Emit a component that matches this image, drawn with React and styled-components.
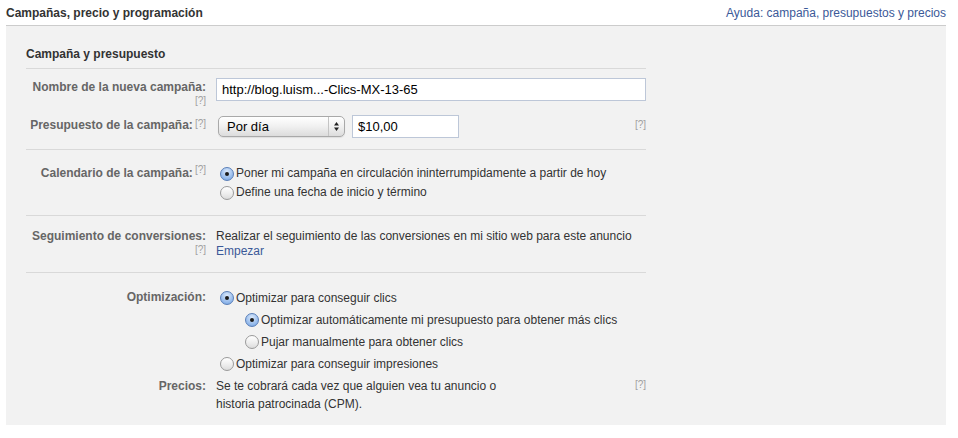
import React from "react";
import styled, { createGlobalStyle } from "styled-components";

const GlobalStyle = createGlobalStyle`
  html, body {
    margin: 0;
    padding: 0;
    background: #fff;
  }
  body {
    font-family: "Liberation Sans", Arial, Helvetica, sans-serif;
    font-size: 12px;
    color: #333;
  }
`;

const Page = styled.div`
  width: 940px;
  margin: 0 6px;
`;

const Header = styled.div`
  display: flex;
  justify-content: space-between;
  align-items: center;
  height: 25px;
  border-bottom: 1px solid #ccc;
`;

const Title = styled.h2`
  margin: 0;
  font-size: 12px;
  font-weight: bold;
  color: #333;
`;

const HelpLink = styled.a`
  color: #3b5998;
  text-decoration: none;
  font-size: 12px;
  cursor: pointer;
`;

const Panel = styled.div`
  background: #f2f2f2;
  padding: 21px 20px 0;
  height: 378px;
`;

const Section = styled.div`
  width: 620px;
`;

const SubHeading = styled.h3`
  margin: 0;
  font-size: 12px;
  font-weight: bold;
  line-height: 14px;
  color: #333;
  padding-bottom: 7px;
  border-bottom: 1px solid #d9d9d9;
`;

const Group = styled.div`
  padding: ${(p) => p.$pad || "12px 0"};
  border-bottom: ${(p) => (p.$last ? "none" : "1px solid #d9d9d9")};
  display: flex;
  flex-direction: column;
  gap: ${(p) => p.$gap || "0px"};
`;

const Row = styled.div`
  display: grid;
  grid-template-columns: 180px 1fr auto;
  column-gap: 10px;
  align-items: start;
`;

const Label = styled.div`
  text-align: right;
  font-weight: bold;
  color: #666;
  font-size: 12px;
  line-height: ${(p) => p.$lh || "15px"};
  padding-top: ${(p) => p.$pt || "0px"};
  white-space: nowrap;
`;

const Help = styled.span`
  display: ${(p) => (p.$block ? "block" : "inline")};
  color: #a0a0a0;
  font-weight: normal;
  font-size: 10px;
  line-height: 12px;
  vertical-align: ${(p) => (p.$block ? "baseline" : "top")};
  margin-left: ${(p) => (p.$block ? "0" : "2px")};
`;

const SideHelp = styled(Help)`
  display: block;
  padding-top: ${(p) => p.$pt || "6px"};
`;

const Content = styled.div`
  display: flex;
  flex-direction: column;
  line-height: ${(p) => p.$lh || "15px"};
  color: #333;
`;

const TextInput = styled.input`
  box-sizing: border-box;
  height: 23px;
  width: ${(p) => p.$w};
  border: 1px solid #bdc7d8;
  background: #fff;
  padding: 0 5px;
  font-family: "Liberation Sans", Arial, sans-serif;
  font-size: 13px;
  color: #000;
  outline: none;
`;

const Inline = styled.div`
  display: flex;
  align-items: center;
  gap: 7px;
`;

const SelectBox = styled.div`
  box-sizing: border-box;
  margin-left: 2px;
  width: 127px;
  height: 21px;
  border: 1px solid #a9a9a9;
  border-radius: 5px;
  background: linear-gradient(#ffffff, #f0f0f0 50%, #dcdcdc);
  display: flex;
  align-items: center;
  font-size: 13px;
  color: #000;
  box-shadow: 0 1px 1px rgba(0, 0, 0, 0.08);
`;

const SelectText = styled.span`
  flex: 1;
  padding-left: 8px;
`;

const SelectArrows = styled.span`
  width: 15px;
  height: 100%;
  border-left: 1px solid #c4c4c4;
  display: flex;
  align-items: center;
  justify-content: center;
`;

const Option = styled.label`
  display: flex;
  align-items: center;
  gap: 2px;
  height: ${(p) => p.$h || "19px"};
  margin-left: ${(p) => p.$indent || "4px"};
  color: #333;
`;

const Radio = styled.span`
  box-sizing: border-box;
  width: 14px;
  height: 14px;
  border-radius: 50%;
  flex: none;
  display: flex;
  align-items: center;
  justify-content: center;
  border: 1px solid ${(p) => (p.$checked ? "#5a7fb8" : "#9a9a9a")};
  background: ${(p) =>
    p.$checked
      ? "radial-gradient(circle at 50% 30%, #dbe9fb, #8fb6ea 70%, #6c9ad9)"
      : "linear-gradient(#ffffff, #ececec 60%, #dcdcdc)"};
  &::after {
    content: "";
    display: ${(p) => (p.$checked ? "block" : "none")};
    width: 4px;
    height: 4px;
    border-radius: 50%;
    background: #1a1a1a;
  }
`;

const Link = styled.a`
  color: #3b5998;
  text-decoration: none;
  cursor: pointer;
`;

const Arrows = () => (
  <svg width="7" height="11" viewBox="0 0 7 11">
    <path d="M3.5 1 L6 4.5 L1 4.5 Z" fill="#222" />
    <path d="M3.5 10 L6 6.5 L1 6.5 Z" fill="#222" />
  </svg>
);

const RadioOption = ({ checked, indent, h, children }) => (
  <Option $indent={indent} $h={h}>
    <Radio $checked={checked} />
    {children}
  </Option>
);

export default function App() {
  return (
    <>
      <GlobalStyle />
      <Page>
        <Header>
          <Title>Campañas, precio y programación</Title>
          <HelpLink>Ayuda: campaña, presupuestos y precios</HelpLink>
        </Header>
        <Panel>
          <Section>
            <SubHeading>Campaña y presupuesto</SubHeading>

            <Group $pad="9px 0 11px" $gap="8px">
              <Row>
                <Label $pt="2px">
                  Nombre de la nueva campaña:
                  <Help $block>[?]</Help>
                </Label>
                <TextInput $w="430px" defaultValue="http://blog.luism...-Clics-MX-13-65" />
              </Row>
              <Row>
                <Label $pt="3px">
                  Presupuesto de la campaña:<Help>[?]</Help>
                </Label>
                <Inline>
                  <SelectBox>
                    <SelectText>Por día</SelectText>
                    <SelectArrows>
                      <Arrows />
                    </SelectArrows>
                  </SelectBox>
                  <TextInput $w="107px" defaultValue="$10,00" />
                </Inline>
                <SideHelp $pt="4px">[?]</SideHelp>
              </Row>
            </Group>

            <Group $pad="14px 0 13px">
              <Row>
                <Label $lh="19px">
                  Calendario de la campaña:<Help>[?]</Help>
                </Label>
                <Content>
                  <RadioOption checked>
                    Poner mi campaña en circulación ininterrumpidamente a partir de hoy
                  </RadioOption>
                  <RadioOption>Define una fecha de inicio y término</RadioOption>
                </Content>
              </Row>
            </Group>

            <Group $pad="13px 0 13px">
              <Row>
                <Label>
                  Seguimiento de conversiones:
                  <Help $block>[?]</Help>
                </Label>
                <Content>
                  <span>Realizar el seguimiento de las conversiones en mi sitio web para este anuncio</span>
                  <Link>Empezar</Link>
                </Content>
              </Row>
            </Group>

            <Group $pad="14px 0 0" $gap="2px" $last>
              <Row>
                <Label $lh="20px">Optimización:</Label>
                <Content>
                  <RadioOption checked h="22px">Optimizar para conseguir clics</RadioOption>
                  <RadioOption checked indent="29px" h="22px">
                    Optimizar automáticamente mi presupuesto para obtener más clics
                  </RadioOption>
                  <RadioOption indent="29px" h="22px">Pujar manualmente para obtener clics</RadioOption>
                  <RadioOption h="22px">Optimizar para conseguir impresiones</RadioOption>
                </Content>
              </Row>
              <Row>
                <Label $lh="18px">Precios:</Label>
                <Content $lh="18px">
                  <span>
                    Se te cobrará cada vez que alguien vea tu anuncio o
                    <br />
                    historia patrocinada (CPM).
                  </span>
                </Content>
                <SideHelp $pt="2px">[?]</SideHelp>
              </Row>
            </Group>
          </Section>
        </Panel>
      </Page>
    </>
  );
}
